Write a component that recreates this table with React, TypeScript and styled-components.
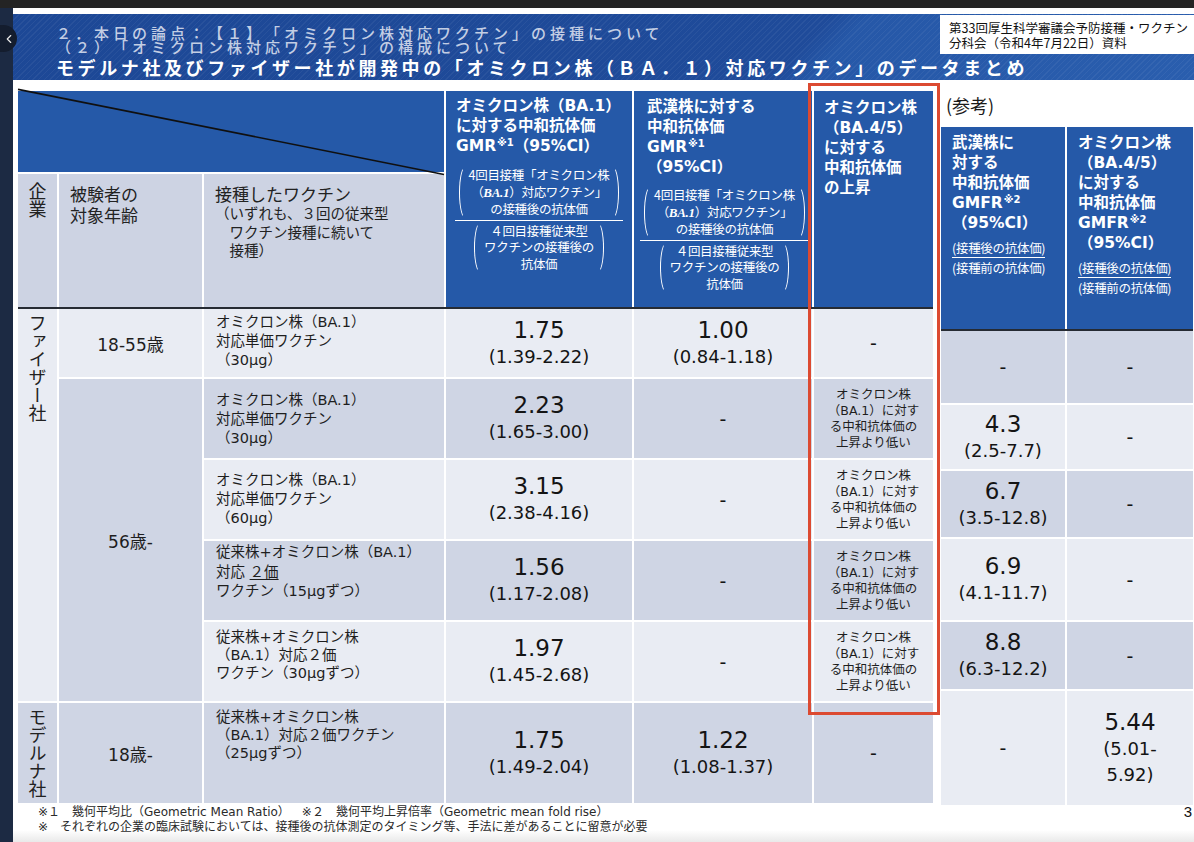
import React from 'react';
import styled, { createGlobalStyle } from 'styled-components';
import { ChevronLeft } from 'lucide-react';

const MIX = '"DejaVu Sans", "Noto Sans CJK JP", sans-serif';
const LIGHT = '#e9ecf3';
const DARK = '#cfd5e4';
const BLUE = '#2559a8';
const COLS = '39px 143px 240px 186px 178px 119px';
const REF_COLS = '124px 126px';

type Tone = 'light' | 'dark';

const GlobalStyle = createGlobalStyle`
  * { box-sizing: border-box; text-spacing-trim: space-all; }
  html, body { margin: 0; padding: 0; }
  body {
    width: 1194px;
    height: 842px;
    overflow: hidden;
    background: #1c2a43;
    font-family: "Noto Sans CJK JP", sans-serif;
    color: #1a1a1a;
  }
`;

const Screen = styled.div`
  width: 1194px;
  height: 842px;
  display: flex;
  flex-direction: column;
  overflow: hidden;
`;

const TopBar = styled.div`
  height: 8px;
  flex: none;
  background: #242424;
`;

const Frame = styled.div`
  flex: 1;
  display: flex;
  min-height: 0;
`;

const Rail = styled.div`
  width: 13px;
  flex: none;
  background: #1c2a43;
  position: relative;
`;

const Knob = styled.div`
  position: absolute;
  left: 0;
  top: 17px;
  width: 17px;
  height: 27px;
  border-radius: 0 14px 14px 0;
  background: #141d2e;
  color: #e8e8e8;
  display: flex;
  align-items: center;
  justify-content: center;
  z-index: 2;
`;

const Slide = styled.div`
  flex: 1;
  display: flex;
  flex-direction: column;
  padding-top: 6px;
  background: linear-gradient(180deg, #fff 0, #fff 822px, #e9e9e9 834px);
`;

const Banner = styled.header`
  position: relative;
  height: 66px;
  flex: none;
  padding: 12px 0 0 43px;
  background:
    repeating-linear-gradient(135deg, rgba(255, 255, 255, 0.05) 0 1px, transparent 1px 4px),
    linear-gradient(132deg, #1d4896 0%, #1f4b9a 66%, #2658a8 69%, #2a5eae 100%);
`;

const Kicker = styled.div`
  font-size: 15px;
  line-height: 14px;
  letter-spacing: 4px;
  font-weight: 500;
  color: #c3cee4;
  white-space: nowrap;
`;

const Headline = styled.h1`
  margin: 2px 0 0;
  font-size: 18px;
  line-height: 22px;
  letter-spacing: 3.6px;
  font-weight: 700;
  color: #fff;
  white-space: nowrap;
`;

const SourceNote = styled.div`
  position: absolute;
  top: 1px;
  right: 0;
  width: 254px;
  padding: 5px 6px 4px 9px;
  background: #fff;
  font-size: 12.5px;
  line-height: 15px;
  color: #111;
  white-space: nowrap;
`;

const Content = styled.main`
  display: flex;
  align-items: flex-start;
  gap: 8px;
  margin-top: 11px;
  padding-left: 5px;
`;

const MainWrap = styled.section`
  position: relative;
  width: 915px;
  flex: none;
`;

const HeadGrid = styled.div`
  display: grid;
  grid-template-columns: ${COLS};
  grid-template-rows: 81px 133px;
  gap: 2px;
`;

const DiagCell = styled.div`
  grid-column: 1 / 4;
  grid-row: 1;
  background: ${BLUE};
  position: relative;
`;

const DiagLine = styled.svg`
  position: absolute;
  inset: 0;
  width: 100%;
  height: 100%;
  overflow: visible;
`;

const LabelCell = styled.div<{ $col: number }>`
  grid-column: ${p => p.$col};
  grid-row: 2;
  background: #cdd3e3;
  font-size: 17px;
  line-height: 21px;
  padding: 9px 8px 0 11px;
  color: #222;
  white-space: nowrap;
`;

const VerticalLabel = styled.div`
  grid-column: 1;
  grid-row: 2;
  background: #cdd3e3;
  display: flex;
  justify-content: center;
  padding-top: 8px;
  font-size: 18px;
  color: #222;
`;

const Vertical = styled.span`
  writing-mode: vertical-rl;
  line-height: 20px;
`;

const LabelSub = styled.div`
  font-size: 14.5px;
  line-height: 18.5px;
  padding-left: 1em;
  text-indent: -1em;
`;

const BlueHead = styled.div<{ $col: number; $pt: number; $pl?: number }>`
  grid-column: ${p => p.$col};
  grid-row: 1 / 3;
  background: ${BLUE};
  color: #fff;
  padding: ${p => p.$pt}px 4px 0 ${p => p.$pl ?? 10}px;
`;

const HeadTitle = styled.div`
  font-family: ${MIX};
  font-weight: 700;
  font-size: 15.5px;
  line-height: 20px;
  white-space: nowrap;
`;

const Sup = styled.span`
  font-size: 10px;
  vertical-align: 5px;
  line-height: 0;
  margin-left: 1px;
`;

const Frac = styled.div<{ $mt: number }>`
  display: flex;
  flex-direction: column;
  align-items: center;
  width: fit-content;
  margin: ${p => p.$mt}px auto 0;
  transform: translateX(-3px);
  font-size: 12.5px;
  line-height: 16.5px;
  letter-spacing: -0.3px;
  font-weight: 400;
  white-space: nowrap;
`;

const ParenBox = styled.div`
  display: flex;
  align-items: stretch;
  &::before,
  &::after {
    content: '';
    flex: none;
    width: 11px;
    border: 1.3px solid transparent;
    border-radius: 50%;
  }
  &::before {
    border-left-color: #fff;
    margin-right: -3px;
  }
  &::after {
    border-right-color: #fff;
    margin-left: -3px;
  }
`;

const ParenBody = styled.div`
  text-align: center;
  padding: 1px 0;
`;

const FracBar = styled.div`
  align-self: stretch;
  height: 1px;
  background: #fff;
  margin: 1px -4px;
`;

const MathBA = styled.em`
  font-family: "Liberation Serif", serif;
  font-style: italic;
  font-weight: 700;
  font-size: 13px;
`;

const Rule = styled.div`
  height: 2px;
  background: #262b33;
`;

const BodyGrid = styled.div<{ $cols: string; $rows: string }>`
  display: grid;
  grid-template-columns: ${p => p.$cols};
  grid-template-rows: ${p => p.$rows};
  gap: 2px;
`;

const Cell = styled.div<{ $tone: Tone; $span?: number }>`
  background: ${p => (p.$tone === 'light' ? LIGHT : DARK)};
  grid-row: span ${p => p.$span ?? 1};
  min-width: 0;
`;

const CompanyCell = styled(Cell)`
  display: flex;
  justify-content: center;
  padding-top: 5px;
  font-size: 18px;
  color: #222;
`;

const AgeCell = styled(Cell)`
  display: flex;
  align-items: center;
  justify-content: center;
  font-family: ${MIX};
  font-size: 17px;
  color: #1e1e1e;
`;

const VaccineCell = styled(Cell)<{ $pt: number; $lh: number }>`
  padding: ${p => p.$pt}px 4px 0 12px;
  font-family: ${MIX};
  font-size: 14.5px;
  line-height: ${p => p.$lh}px;
  color: #1e1e1e;
  white-space: nowrap;
`;

const ValueCell = styled(Cell)`
  display: flex;
  flex-direction: column;
  align-items: center;
  justify-content: center;
  font-family: ${MIX};
  color: #141414;
`;

const Big = styled.div`
  font-size: 23px;
  line-height: 27px;
`;

const Small = styled.div`
  font-size: 18px;
  line-height: 26px;
`;

const Dash = styled.div`
  font-size: 19px;
  line-height: 20px;
`;

const NoteText = styled.div`
  font-family: ${MIX};
  font-size: 12.5px;
  line-height: 16px;
  text-align: center;
  color: #1e1e1e;
  white-space: nowrap;
`;

const Underlined = styled.span`
  text-decoration: underline;
  text-underline-offset: 2px;
`;

const RedFrame = styled.div`
  position: absolute;
  left: 790px;
  top: -8px;
  width: 132px;
  height: 632px;
  border: 3px solid #dc4a31;
  pointer-events: none;
`;

const RefWrap = styled.section`
  width: 252px;
  flex: none;
  display: flex;
  flex-direction: column;
`;

const RefLabel = styled.div`
  height: 36px;
  font-size: 18px;
  line-height: 28px;
  padding-left: 5px;
  color: #1a1a1a;
`;

const RefHeadGrid = styled.div`
  display: grid;
  grid-template-columns: ${REF_COLS};
  height: 202px;
  gap: 2px;
`;

const RefHead = styled.div`
  background: ${BLUE};
  color: #fff;
  padding: 6px 4px 0 11px;
`;

const RefFrac = styled.div`
  display: inline-flex;
  flex-direction: column;
  margin-top: 5px;
  font-size: 12.5px;
  line-height: 19px;
  letter-spacing: -0.3px;
  white-space: nowrap;
`;

const RefDen = styled.div`
  border-top: 1.5px solid #fff;
`;

const Footer = styled.footer`
  display: flex;
  justify-content: space-between;
  padding: 0 2px 0 25px;
`;

const Notes = styled.div`
  font-family: ${MIX};
  font-size: 12px;
  line-height: 15px;
  color: #2a2a2a;
  white-space: pre;
`;

const PageNo = styled.div`
  font-family: "Liberation Sans", sans-serif;
  font-size: 15px;
  line-height: 15px;
  margin-top: -1px;
  color: #111;
`;

type Val = string[] | null;

interface MainRow {
  tone: Tone;
  pt: number;
  lh: number;
  company?: { label: string; span: number; tone: Tone };
  age?: { label: string; span: number; tone: Tone };
  vaccine: React.ReactNode[];
  ba1: Val;
  wuhan: Val;
  lower: boolean;
}

const mainRows: MainRow[] = [
  {
    tone: 'light', pt: 4, lh: 19,
    company: { label: 'ファイザー社', span: 5, tone: 'light' },
    age: { label: '18-55歳', span: 1, tone: 'light' },
    vaccine: ['オミクロン株（BA.1）', '対応単価ワクチン', '（30μg）'],
    ba1: ['1.75', '(1.39-2.22)'], wuhan: ['1.00', '(0.84-1.18)'], lower: false,
  },
  {
    tone: 'dark', pt: 12, lh: 19,
    age: { label: '56歳-', span: 4, tone: 'dark' },
    vaccine: ['オミクロン株（BA.1）', '対応単価ワクチン', '（30μg）'],
    ba1: ['2.23', '(1.65-3.00)'], wuhan: null, lower: true,
  },
  {
    tone: 'light', pt: 11, lh: 19,
    vaccine: ['オミクロン株（BA.1）', '対応単価ワクチン', '（60μg）'],
    ba1: ['3.15', '(2.38-4.16)'], wuhan: null, lower: true,
  },
  {
    tone: 'dark', pt: 2, lh: 19.5,
    vaccine: ['従来株+オミクロン株（BA.1）', <>対応 <Underlined>２価</Underlined></>, 'ワクチン（15μgずつ）'],
    ba1: ['1.56', '(1.17-2.08)'], wuhan: null, lower: true,
  },
  {
    tone: 'light', pt: 6, lh: 18,
    vaccine: ['従来株+オミクロン株', '（BA.1）対応２価', 'ワクチン（30μgずつ）'],
    ba1: ['1.97', '(1.45-2.68)'], wuhan: null, lower: true,
  },
  {
    tone: 'dark', pt: 5, lh: 18,
    company: { label: 'モデルナ社', span: 1, tone: 'dark' },
    age: { label: '18歳-', span: 1, tone: 'dark' },
    vaccine: ['従来株+オミクロン株', '（BA.1）対応２価ワクチン', '（25μgずつ）'],
    ba1: ['1.75', '(1.49-2.04)'], wuhan: ['1.22', '(1.08-1.37)'], lower: false,
  },
];

const refRows: { tone: Tone; wuhan: Val; ba45: Val }[] = [
  { tone: 'dark', wuhan: null, ba45: null },
  { tone: 'light', wuhan: ['4.3', '(2.5-7.7)'], ba45: null },
  { tone: 'dark', wuhan: ['6.7', '(3.5-12.8)'], ba45: null },
  { tone: 'light', wuhan: ['6.9', '(4.1-11.7)'], ba45: null },
  { tone: 'dark', wuhan: ['8.8', '(6.3-12.2)'], ba45: null },
  { tone: 'light', wuhan: null, ba45: ['5.44', '(5.01-', '5.92)'] },
];

const Values = ({ v }: { v: Val }) =>
  v ? (
    <>
      <Big>{v[0]}</Big>
      {v.slice(1).map(s => <Small key={s}>{s}</Small>)}
    </>
  ) : (
    <Dash>-</Dash>
  );

const Paren = ({ children }: { children: React.ReactNode }) => (
  <ParenBox>
    <ParenBody>{children}</ParenBody>
  </ParenBox>
);

const GmrFormula = ({ mt }: { mt: number }) => (
  <Frac $mt={mt}>
    <Paren>
      4回目接種「オミクロン株<br />
      （<MathBA>BA.1</MathBA>）対応ワクチン」<br />
      の接種後の抗体価
    </Paren>
    <FracBar />
    <Paren>
      ４回目接種従来型<br />
      ワクチンの接種後の<br />
      抗体価
    </Paren>
  </Frac>
);

const GmfrFormula = () => (
  <RefFrac>
    <div>(接種後の抗体価)</div>
    <RefDen>(接種前の抗体価)</RefDen>
  </RefFrac>
);

export default function App() {
  return (
    <Screen>
      <GlobalStyle />
      <TopBar />
      <Frame>
        <Rail>
          <Knob>
            <ChevronLeft size={14} strokeWidth={2} />
          </Knob>
        </Rail>
        <Slide>
          <Banner>
            <Kicker>２．本日の論点：【１】「オミクロン株対応ワクチン」の接種について</Kicker>
            <Kicker>（２）「オミクロン株対応ワクチン」の構成について</Kicker>
            <Headline>モデルナ社及びファイザー社が開発中の「オミクロン株（ＢＡ．１）対応ワクチン」のデータまとめ</Headline>
            <SourceNote>
              第33回厚生科学審議会予防接種・ワクチン<br />
              分科会（令和4年7月22日）資料
            </SourceNote>
          </Banner>

          <Content>
            <MainWrap>
              <HeadGrid>
                <DiagCell>
                  <DiagLine viewBox="0 0 100 100" preserveAspectRatio="none">
                    <line x1="0" y1="-2" x2="100" y2="103" stroke="#101010" strokeWidth="1.6" vectorEffect="non-scaling-stroke" />
                  </DiagLine>
                </DiagCell>
                <BlueHead $col={4} $pt={5}>
                  <HeadTitle>
                    オミクロン株（BA.1）<br />
                    に対する中和抗体価<br />
                    GMR<Sup>※1</Sup>（95%CI）
                  </HeadTitle>
                  <GmrFormula mt={10} />
                </BlueHead>
                <BlueHead $col={5} $pt={6} $pl={13}>
                  <HeadTitle>
                    武漢株に対する<br />
                    中和抗体価<br />
                    GMR<Sup>※1</Sup><br />
                    （95%CI）
                  </HeadTitle>
                  <GmrFormula mt={9} />
                </BlueHead>
                <BlueHead $col={6} $pt={7}>
                  <HeadTitle>
                    オミクロン株<br />
                    （BA.4/5）<br />
                    に対する<br />
                    中和抗体価<br />
                    の上昇
                  </HeadTitle>
                </BlueHead>
                <VerticalLabel>
                  <Vertical>企業</Vertical>
                </VerticalLabel>
                <LabelCell $col={2}>
                  被験者の<br />
                  対象年齢
                </LabelCell>
                <LabelCell $col={3}>
                  接種したワクチン
                  <LabelSub>
                    （いずれも、３回の従来型<br />
                    ワクチン接種に続いて<br />
                    接種）
                  </LabelSub>
                </LabelCell>
              </HeadGrid>
              <Rule />
              <BodyGrid $cols={COLS} $rows="68px 79px 79px 79px 79px 100px">
                {mainRows.map((r, i) => (
                  <React.Fragment key={i}>
                    {r.company && (
                      <CompanyCell $tone={r.company.tone} $span={r.company.span}>
                        <Vertical>{r.company.label}</Vertical>
                      </CompanyCell>
                    )}
                    {r.age && (
                      <AgeCell $tone={r.age.tone} $span={r.age.span}>
                        {r.age.label}
                      </AgeCell>
                    )}
                    <VaccineCell $tone={r.tone} $pt={r.pt} $lh={r.lh}>
                      {r.vaccine.map((line, j) => (
                        <div key={j}>{line}</div>
                      ))}
                    </VaccineCell>
                    <ValueCell $tone={r.tone}>
                      <Values v={r.ba1} />
                    </ValueCell>
                    <ValueCell $tone={r.tone}>
                      <Values v={r.wuhan} />
                    </ValueCell>
                    <ValueCell $tone={r.tone}>
                      {r.lower ? (
                        <NoteText>
                          オミクロン株<br />
                          （BA.1）に対す<br />
                          る中和抗体価の<br />
                          上昇より低い
                        </NoteText>
                      ) : (
                        <Dash>-</Dash>
                      )}
                    </ValueCell>
                  </React.Fragment>
                ))}
              </BodyGrid>
              <RedFrame />
            </MainWrap>

            <RefWrap>
              <RefLabel>(参考)</RefLabel>
              <RefHeadGrid>
                <RefHead>
                  <HeadTitle>
                    武漢株に<br />
                    対する<br />
                    中和抗体価<br />
                    GMFR<Sup>※2</Sup><br />
                    （95%CI）
                  </HeadTitle>
                  <GmfrFormula />
                </RefHead>
                <RefHead>
                  <HeadTitle>
                    オミクロン株<br />
                    （BA.4/5）<br />
                    に対する<br />
                    中和抗体価<br />
                    GMFR<Sup>※2</Sup><br />
                    （95%CI）
                  </HeadTitle>
                  <GmfrFormula />
                </RefHead>
              </RefHeadGrid>
              <Rule />
              <BodyGrid $cols={REF_COLS} $rows="72px 64px 66px 81px 67px 114px">
                {refRows.map((r, i) => (
                  <React.Fragment key={i}>
                    <ValueCell $tone={r.tone}>
                      <Values v={r.wuhan} />
                    </ValueCell>
                    <ValueCell $tone={r.tone}>
                      <Values v={r.ba45} />
                    </ValueCell>
                  </React.Fragment>
                ))}
              </BodyGrid>
            </RefWrap>
          </Content>

          <Footer>
            <Notes>
              {'※１　幾何平均比（Geometric Mean Ratio）　※２　幾何平均上昇倍率（Geometric mean fold rise）\n※　それぞれの企業の臨床試験においては、接種後の抗体測定のタイミング等、手法に差があることに留意が必要'}
            </Notes>
            <PageNo>3</PageNo>
          </Footer>
        </Slide>
      </Frame>
    </Screen>
  );
}
